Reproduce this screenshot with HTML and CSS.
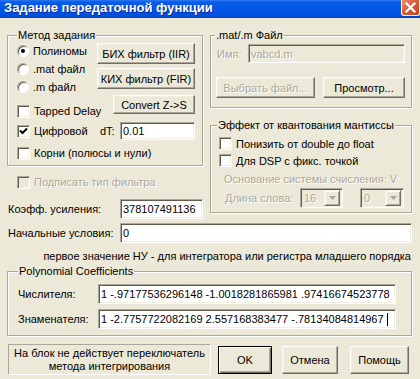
FILE: index.html
```html
<!DOCTYPE html>
<html lang="ru">
<head>
<meta charset="utf-8">
<title>Задание передаточной функции</title>
<link rel="stylesheet" href="styles.css">
</head>
<body>
<div class="titlebar">
  <span class="title">Задание передаточной функции</span>
  <span class="close"><svg width="11" height="11" viewBox="0 0 11 11"><path d="M1.5 1.5 L9.5 9.5 M9.5 1.5 L1.5 9.5" stroke="#fff" stroke-width="2.2" stroke-linecap="square"/></svg></span>
</div>
<div class="body">
  <div class="top">
    <div class="left-col">
      <div class="group g-method">
        <span class="legend lg-method">Метод задания</span>
        <div class="method-top">
          <div class="radios">
            <div class="row"><span class="radio checked"></span>Полиномы</div>
            <div class="row"><span class="radio"></span>.mat файл</div>
            <div class="row"><span class="radio"></span>.m файл</div>
            <div class="row tapped"><span class="check"></span>Tapped Delay</div>
          </div>
          <div class="btns">
            <button class="btn b-iir">БИХ фильтр (IIR)</button>
            <button class="btn b-fir">КИХ фильтр (FIR)</button>
            <button class="btn b-conv">Convert Z-&gt;S</button>
          </div>
        </div>
        <div class="row digital">
          <span class="check"><svg width="9" height="9" viewBox="0 0 9 9"><path d="M1 3.5 L3.5 6 L8 1.5" fill="none" stroke="#000" stroke-width="2"/></svg></span>
          <span class="dig-txt">Цифровой</span><span class="dt">dT:</span><span class="edit e-dt">0.01</span>
        </div>
        <div class="row roots"><span class="check"></span>Корни (полюсы и нули)</div>
      </div>
      <div class="row sign disabled"><span class="check dis"></span>Подписать тип фильтра</div>
      <div class="row gain"><span class="lbl lbl-gain">Коэфф. усиления:</span><span class="edit e-gain">378107491136</span></div>
    </div>
    <div class="right-col">
      <div class="group g-mat">
        <span class="legend lg-mat">.mat/.m Файл</span>
        <div class="row name-row"><span class="lbl lbl-name disabled">Имя:</span><span class="edit e-name dis-edit">vabcd.m</span></div>
        <div class="mat-btns">
          <button class="btn b-choose disabled">Выбрать файл...</button>
          <button class="btn b-view">Просмотр...</button>
        </div>
      </div>
      <div class="group g-effect">
        <span class="legend lg-effect">Эффект от квантования мантиссы</span>
        <div class="row erow"><span class="check"></span>Понизить от double до float</div>
        <div class="row erow"><span class="check"></span>Для DSP с фикс. точкой</div>
        <div class="row erow base disabled">Основание системы счисления: V</div>
        <div class="row wordlen">
          <span class="lbl lbl-len disabled">Длина слова:</span>
          <span class="combo c1"><span class="cval">16</span><span class="cbtn"><svg width="7" height="4" viewBox="0 0 7 4"><path d="M0 0 H7 L3.5 4 Z" fill="#ACA899"/></svg></span></span>
          <span class="combo c2"><span class="cval">0</span><span class="cbtn"><svg width="7" height="4" viewBox="0 0 7 4"><path d="M0 0 H7 L3.5 4 Z" fill="#ACA899"/></svg></span></span>
        </div>
      </div>
    </div>
  </div>
  <div class="row init"><span class="lbl lbl-gain">Начальные условия:</span><span class="edit e-init">0</span></div>
  <div class="hint">первое значение НУ - для интегратора или регистра младшего порядка</div>
  <div class="group g-poly">
    <span class="legend lg-poly">Polynomial Coefficients</span>
    <div class="row prow"><span class="lbl lbl-poly">Числителя:</span><span class="edit e-poly">1 -.97177536296148 -1.0018281865981 .97416674523778</span></div>
    <div class="row prow prow2"><span class="lbl lbl-poly">Знаменателя:</span><span class="edit e-poly">1 -2.7757722082169 2.557168383477 -.78134084814967<span class="caret"></span></span></div>
  </div>
  <div class="bottom">
    <div class="static">На блок не действует переключатель<br>метода интегрирования</div>
    <button class="btn b-ok">OK</button>
    <button class="btn b-cancel">Отмена</button>
    <button class="btn b-help">Помощь</button>
  </div>
</div>
</body>
</html>
```

FILE: styles.css
```css
* { box-sizing: border-box; margin: 0; padding: 0; }
html, body { width: 420px; height: 379px; overflow: hidden; }
body {
  font-family: "Liberation Sans", Arial, sans-serif;
  font-size: 11px;
  color: #000;
  background: #ECE9D8;
}

/* title bar */
.titlebar {
  height: 18px;
  display: flex;
  align-items: flex-start;
  background: linear-gradient(#2F7AF2 0, #0A5CE8 2px, #0055E5 10px, #0052DF 15px, #0043C4 18px);
}
.title {
  font-weight: bold;
  font-size: 13px;
  line-height: 16px;
  color: #fff;
  padding-left: 4px;
  text-shadow: 1px 1px 0 #0D2A9A;
  white-space: nowrap;
}
.close {
  margin-left: auto;
  width: 19px;
  height: 16px;
  border: 1px solid #fff;
  border-top: none;
  border-radius: 0 0 3px 3px;
  background: linear-gradient(135deg, #EE8F72 0, #E15A35 45%, #C93E17 100%);
  display: flex;
  align-items: center;
  justify-content: center;
}

.body { padding: 0 8px 0 7px; }

/* generic controls */
.row { display: flex; align-items: center; height: 18px; white-space: nowrap; }
.disabled { color: #ACA899; text-shadow: 1px 1px 0 #fff; }

.group {
  position: relative;
  border: 1px solid #ACA899;
  box-shadow: inset 1px 1px 0 #fff, 1px 1px 0 #fff;
}
.legend {
  position: absolute;
  top: -7px;
  line-height: 13px;
  padding: 0 1px;
  background: #ECE9D8;
  white-space: nowrap;
}

.edit {
  display: flex;
  align-items: center;
  background: #fff;
  border: 1px solid;
  border-color: #ACA899 #fff #fff #ACA899;
  box-shadow: inset 1px 1px 0 #5F5D52, inset -1px -1px 0 #F1EFE2;
  padding-left: 2px;
  white-space: nowrap;
  overflow: hidden;
}
.dis-edit { background: #ECE9D8; color: #ACA899; text-shadow: 1px 1px 0 #fff; }

.check {
  flex: none;
  width: 13px;
  height: 13px;
  margin-right: 4px;
  background: #fff;
  border: 1px solid;
  border-color: #ACA899 #fff #fff #ACA899;
  box-shadow: inset 1px 1px 0 #5F5D52, inset -1px -1px 0 #F1EFE2;
  display: flex;
  align-items: center;
  justify-content: center;
}
.check.dis { background: #ECE9D8; }

.radio {
  flex: none;
  position: relative;
  width: 12px;
  height: 12px;
  margin-right: 4px;
  border-radius: 50%;
  background: #fff;
  border: 1px solid;
  border-color: #ACA899 #fff #fff #ACA899;
  box-shadow: inset 1px 1px 0 #5F5D52;
}
.radio.checked::after {
  content: "";
  position: absolute;
  left: 3px;
  top: 3px;
  width: 4px;
  height: 4px;
  border-radius: 50%;
  background: #000;
}

.btn {
  font: inherit;
  color: #000;
  background: #ECE9D8;
  border: 1px solid;
  border-color: #fff #716F64 #716F64 #fff;
  box-shadow: inset -1px -1px 0 #ACA899, inset 1px 1px 0 #F1EFE2;
  display: flex;
  align-items: center;
  justify-content: center;
  white-space: nowrap;
}
.btn.disabled { color: #ACA899; text-shadow: 1px 1px 0 #fff; }

/* top area */
.top { display: flex; align-items: flex-start; margin-top: 17px; }
.left-col { width: 196px; }
.right-col { width: 202px; margin-left: 7px; }

/* method group */
.g-method { height: 131px; padding: 6px 0 0 9px; }
.lg-method { left: 9px; }
.method-top { display: flex; align-items: flex-start; }
.radios { width: 80px; }
.tapped { margin-top: 6px; }
.btns { display: flex; flex-direction: column; align-items: flex-end; width: 98px; }
.b-iir { margin-top: 1px; width: 98px; height: 21px; }
.b-fir { margin-top: 4px; width: 98px; height: 21px; }
.b-conv { margin-top: 6px; width: 82px; height: 19px; }
.digital { margin-top: 2px; }
.dig-txt { width: 66px; }
.dt { width: 20px; }
.e-dt { width: 75px; height: 18px; }
.roots { margin-top: 4px; }

.sign { margin-top: 7px; padding-left: 10px; }
.gain { margin-top: 8px; height: 20px; }
.lbl-gain { width: 113px; padding-left: 1px; }
.e-gain { width: 83px; height: 20px; }

/* .mat group */
.g-mat { height: 73px; padding: 8px 0 0 6px; }
.lg-mat { left: 4px; }
.name-row { height: 19px; }
.lbl-name { width: 31px; }
.e-name { width: 157px; height: 19px; }
.mat-btns { display: flex; margin-top: 14px; margin-left: -1px; }
.b-choose { width: 99px; height: 21px; }
.b-view { width: 82px; height: 21px; margin-left: 8px; }

/* effect group */
.g-effect { margin-top: 17px; height: 88px; padding: 9px 0 0 8px; }
.lg-effect { left: 6px; }
.erow { height: 17px; }
.base { margin-top: 1px; padding-left: 5px; }
.wordlen { margin-top: 1px; height: 20px; }
.lbl-len { width: 81px; padding-left: 6px; }
.combo {
  display: flex;
  align-items: center;
  height: 20px;
  background: #ECE9D8;
  border: 1px solid;
  border-color: #ACA899 #fff #fff #ACA899;
  box-shadow: inset 1px 1px 0 #5F5D52, inset -1px -1px 0 #F1EFE2;
  padding: 2px 2px 2px 2px;
}
.c1 { width: 43px; }
.c2 { width: 44px; margin-left: 17px; }
.cval { flex: 1; color: #ACA899; text-shadow: 1px 1px 0 #fff; padding-left: 1px; }
.cbtn {
  width: 16px;
  height: 16px;
  border: 1px solid;
  border-color: #F1EFE2 #716F64 #716F64 #F1EFE2;
  box-shadow: inset 1px 1px 0 #fff, inset -1px -1px 0 #ACA899;
  display: flex;
  align-items: center;
  justify-content: center;
}

/* init */
.init { margin-top: 4px; height: 20px; }
.e-init { width: 292px; height: 20px; }

.hint { margin-top: 6px; line-height: 14px; height: 14px; text-align: right; padding-right: 1px; white-space: nowrap; }

/* poly group */
.g-poly { margin-top: 8px; height: 65px; padding: 12px 0 0 10px; }
.lg-poly { left: 10px; }
.prow { height: 20px; }
.prow2 { margin-top: 5px; }
.lbl-poly { width: 80px; }
.e-poly { width: 298px; height: 20px; }
.caret { display: inline-block; width: 1px; height: 13px; background: #000; margin-left: 3px; }

/* bottom */
.bottom { display: flex; align-items: flex-start; margin-top: 8px; padding-left: 1px; }
.static {
  width: 203px;
  height: 31px;
  border: 1px solid;
  border-color: #ACA899 #fff #fff #ACA899;
  text-align: center;
  line-height: 13px;
  padding-top: 2px;
  white-space: nowrap;
}
.b-ok {
  margin-left: 7px;
  margin-top: 2px;
  width: 54px;
  height: 28px;
  border: 1px solid #000;
  box-shadow: inset 1px 1px 0 #fff, inset -1px -1px 0 #716F64, inset -2px -2px 0 #ACA899;
}
.b-cancel { margin-left: 10px; margin-top: 2px; width: 56px; height: 28px; }
.b-help { margin-left: 12px; margin-top: 2px; width: 59px; height: 28px; }
```
